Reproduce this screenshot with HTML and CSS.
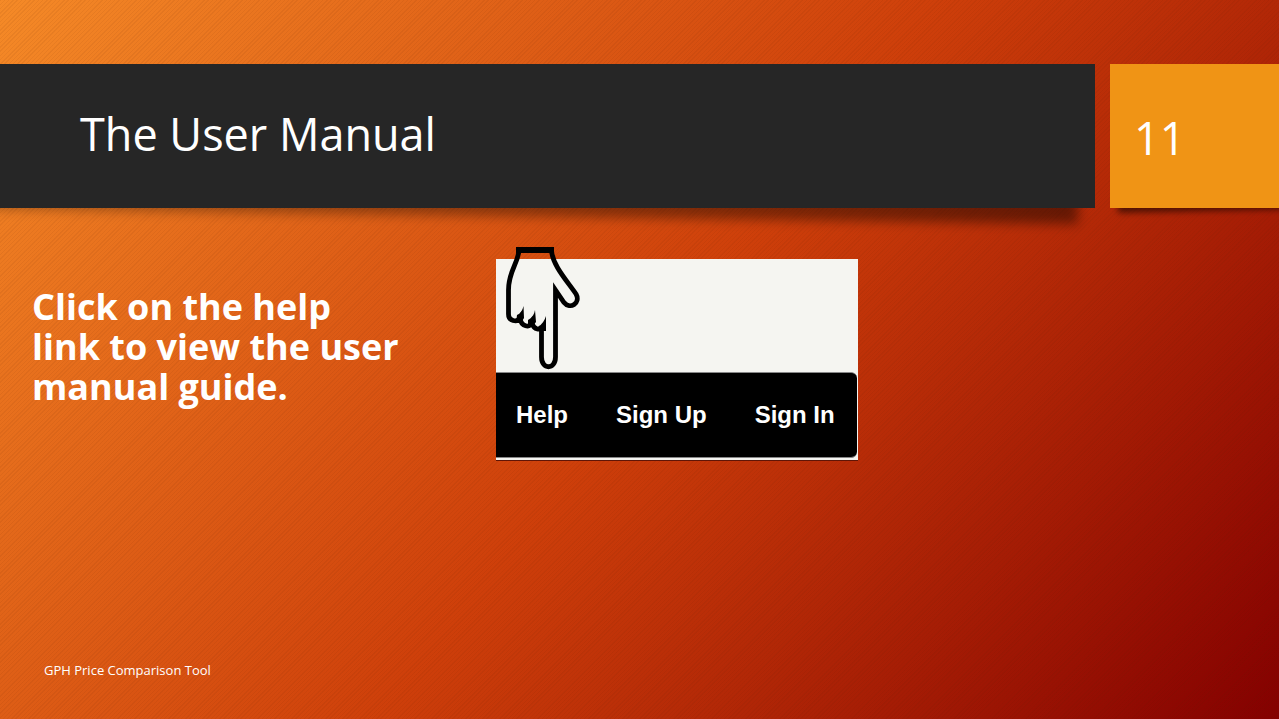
FILE: index.html
```html
<!DOCTYPE html>
<html lang="en">
<head>
<meta charset="utf-8">
<title>The User Manual</title>
<link rel="stylesheet" href="styles.css">
</head>
<body>
<div class="slide">
  <header class="banner">
    <div class="banner-title">
      <svg class="shadow" viewBox="0 0 1095 40" preserveAspectRatio="none" aria-hidden="true">
        <defs>
          <filter id="soft" x="-5%" y="-50%" width="110%" height="200%"><feGaussianBlur stdDeviation="6"/></filter>
          <linearGradient id="fade"><stop offset="0" stop-opacity=".3"/><stop offset="1" stop-opacity=".44"/></linearGradient>
        </defs>
        <path d="M-20-20H1078V16L-20 1Z" fill="url(#fade)" filter="url(#soft)"/>
      </svg>
      <h1 class="title">The User Manual</h1>
    </div>
    <div class="banner-number">
      <svg class="shadow" viewBox="0 0 169 40" preserveAspectRatio="none" aria-hidden="true">
        <defs><filter id="soft-small" x="-10%" y="-50%" width="120%" height="200%"><feGaussianBlur stdDeviation="3"/></filter></defs>
        <path d="M8-10H190V1L8 5Z" fill-opacity=".55" filter="url(#soft-small)"/>
      </svg>
      <span class="number">11</span>
    </div>
  </header>
  <main class="content">
    <p class="instruction">Click on the help link to view the user manual guide.</p>
    <div class="preview">
      <svg class="hand" viewBox="0 0 76 126" aria-hidden="true">
        <path d="M16 5C15 19 5.500 26 5.500 45V69C5.500 76 14 78 17 73C18 82 27 83 29 78C31 85 38 86 38.500 81V112C38.500 125 52.500 125 52.500 112V45L61 57.500C67 65 78 58 73 49C65 37 49 20 48.500 5" transform="translate(-1)" fill="none" stroke="#000" stroke-width="4.800"/>
        <path d="M12 2H50V8H12ZM13 70Q18 68 19.500 61L20 73L17 78H12ZM24 75Q30 72 31 65L32 77L28 82H24ZM34 82Q40 78 42 71V86H34Z"/>
      </svg>
      <nav class="links" aria-label="Account">
        <a href="#help">Help</a>
        <a href="#sign-up">Sign Up</a>
        <a href="#sign-in">Sign In</a>
      </nav>
    </div>
  </main>
  <footer class="footer">GPH Price Comparison Tool</footer>
</div>
</body>
</html>
```
FILE: styles.css
```css
* { box-sizing: border-box; }

body {
  margin: 0;
  color: #fff;
  font-family: "Trebuchet MS", "Open Sans", sans-serif;
}

.slide {
  display: flex;
  flex-direction: column;
  min-height: 100vh;
  padding: 64px 0 36px;
  overflow: hidden;
  background:
    repeating-linear-gradient(135deg, rgba(90, 30, 0, .07) 0 1px, transparent 1px 3px),
    linear-gradient(128deg, #f58a27 0%, #ce3f0a 51%, #840000 100%);
}

.banner {
  display: flex;
  gap: 15px;
  height: 144px;
}

.banner-title,
.banner-number {
  position: relative;
  display: flex;
  align-items: center;
}

.banner-title {
  flex: 1;
  padding: 0 80px 4px;
  background: #262626;
}

.banner-number {
  width: 169px;
  padding: 4px 0 0 24px;
  background: #f09415;
}

.shadow {
  position: absolute;
  top: 100%;
  left: 0;
  width: 100%;
  height: 40px;
}

.title,
.number {
  margin: 0;
  font-size: 45px;
  font-weight: 500;
  line-height: 60px;
}

.content {
  display: flex;
  flex: 1;
  align-items: flex-start;
  gap: 96px;
  padding: 51px 32px 0;
}

.instruction {
  width: 368px;
  margin: 28px 0 0;
  font-size: 36px;
  font-weight: 700;
  line-height: 40px;
}

.preview {
  position: relative;
  width: 362px;
  padding: 113px 0 2px;
  background: #f5f5f1;
  box-shadow: 0 1px 0 #601506;
}

.hand {
  position: absolute;
  top: -14px;
  left: 8px;
  width: 76px;
  height: 126px;
}

.links {
  display: flex;
  gap: 48px;
  margin-right: 1px;
  padding: 0 20px;
  border-top: 1px solid #888;
  border-bottom: 1px solid #888;
  border-radius: 0 6px 6px 0;
  background: #000;
  font: 700 24px/84px "Liberation Sans", Arial, sans-serif;
  white-space: nowrap;
}

.links a {
  color: #fff;
  text-decoration: none;
}

.footer {
  padding: 0 44px;
  font-size: 13px;
  font-weight: 500;
  line-height: 26px;
}
```
